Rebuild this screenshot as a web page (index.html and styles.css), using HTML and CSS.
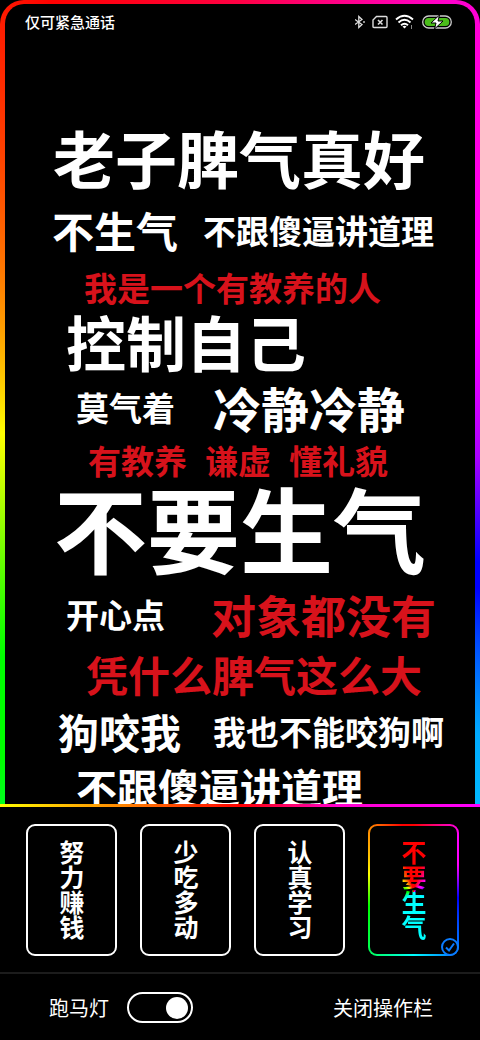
FILE: index.html
```
<!DOCTYPE html>
<html lang="zh-CN">
<head>
  <meta charset="UTF-8" />
  <meta name="viewport" content="width=device-width, initial-scale=1.0" />
  <title>不要生气</title>
  <link rel="stylesheet" href="styles.css">
</head>
<body>
  <div class="marquee-border"></div>

  <header class="status-bar">
    <span>仅可紧急通话</span>
    <div class="status-icons">
      <svg width="10" height="14" viewBox="0 0 10 14" fill="none" stroke="#ddd" stroke-width="1.3">
        <path d="M0 4.500 L7 9.500 L3.800 12.500 V1.500 L7 4.500 L0 9.500" />
        <path d="M9 6 V8" />
      </svg>
      <svg width="16" height="14" viewBox="0 0 16 14" fill="none" stroke="#ddd" stroke-width="1.4">
        <path d="M4.5 1.5 H14 Q15 1.5 15 2.5 V11.5 Q15 12.5 14 12.5 H2 Q1 12.5 1 11.5 V5 Z" />
        <path d="M6 5 L10.500 9.500 M10.500 5 L6 9.500" stroke-width="1.6" />
      </svg>
      <svg width="20" height="16" viewBox="0 0 20 16" fill="none" stroke="#fff" stroke-width="1.9">
        <path d="M1 5.500 Q9.500 -2 18 5.500" />
        <path d="M3.500 8.500 Q9.500 3 15.500 8.500" />
        <path d="M6 11.300 Q9.500 8 13 11.300" />
        <path d="M7.500 12.500 Q9.500 11 11.500 12.500 L9.500 14.500 Z" fill="#fff" stroke="none" />
        <path d="M16.500 11 V15" stroke="#888" stroke-width="1" />
      </svg>
      <svg width="30" height="14" viewBox="0 0 30 14">
        <rect x="0.700" y="1" width="28.600" height="12" rx="6" fill="none" stroke="#ccc" stroke-width="1.300" />
        <rect x="2.700" y="3" width="24.600" height="8" rx="4" fill="#4bbd1b" />
        <path d="M17.500 0 L9 8 H14 L12.500 14 L21 6 H16 Z" fill="#fff" stroke="#000" stroke-width="1" />
      </svg>
    </div>
  </header>

  <main class="wallpaper">
    <div class="line line-title"><span class="xl">老子脾气真好</span></div>
    <div class="line line-calm"><span class="md">不生气</span><span class="sm">不跟傻逼讲道理</span></div>
    <div class="line line-polite red"><span class="sm">我是一个有教养的人</span></div>
    <div class="line line-control"><span class="xl">控制自己</span></div>
    <div class="line line-cool"><span class="sm">莫气着</span><span class="lg">冷静冷静</span></div>
    <div class="line line-manners red"><span class="sm">有教养</span><span class="sm">谦虚</span><span class="sm">懂礼貌</span></div>
    <div class="line line-hero"><span class="hero">不要生气</span></div>
    <div class="line line-happy"><span class="sm">开心点</span><span class="lg red">对象都没有</span></div>
    <div class="line line-temper red"><span class="md">凭什么脾气这么大</span></div>
    <div class="line line-dog"><span class="md">狗咬我</span><span class="sm">我也不能咬狗啊</span></div>
    <div class="line line-reason"><span class="md">不跟傻逼讲道理</span></div>
  </main>

  <section class="panel">
    <div class="cards">
      <label class="card"><input type="radio" name="wallpaper" /><span>努力赚钱</span></label>
      <label class="card"><input type="radio" name="wallpaper" /><span>少吃多动</span></label>
      <label class="card"><input type="radio" name="wallpaper" /><span>认真学习</span></label>
      <label class="card active">
        <input type="radio" name="wallpaper" checked /><span>不要生气</span>
        <svg class="check" width="18" height="18" viewBox="0 0 18 18" fill="none" stroke="#0a7cff" stroke-width="2">
          <circle cx="9" cy="9" r="8" fill="#000" />
          <path d="M5 9.500 L8 12.500 L13 5.500" />
        </svg>
      </label>
    </div>
    <div class="actions">
      <label class="toggle">跑马灯<input type="checkbox" checked /></label>
      <button type="button">关闭操作栏</button>
    </div>
  </section>
</body>
</html>
```
FILE: styles.css
```
* {
  box-sizing: border-box;
}
body {
  margin: 0;
  height: 100vh;
  display: flex;
  flex-direction: column;
  background: #000;
  color: #fff;
  font-family: "Noto Sans CJK SC", sans-serif;
}

/* running light round the screen, the panel covers its lower part */
.marquee-border {
  position: absolute;
  inset: 0;
  border: 5px solid transparent;
  border-top-width: 4px;
  border-radius: 24px;
  background:
    linear-gradient(#000, #000) padding-box,
    conic-gradient(#f04 0deg, #f0c 22deg, #f0d 28deg, #f0f 50deg, #a0f 75deg, #00f 100deg, #00f 106deg, #0af 132deg, #0ff 180deg, #0f0 225deg, #0f0 240deg, #ff0 290deg, #f30 330deg, #f00 340deg, #f04 360deg) border-box;
}

.status-bar {
  position: relative;
  display: flex;
  justify-content: space-between;
  align-items: center;
  height: 43px;
  padding: 0 28px 0 25px;
  font-size: 15px;
  font-weight: 500;
}
.status-icons {
  display: flex;
  align-items: center;
  gap: 7px;
}

.wallpaper {
  position: relative;
  flex: 1;
  min-height: 0;
  overflow: hidden;
  padding-top: 75px;
  font-weight: 700;
  line-height: 1;
}
.line {
  display: flex;
  align-items: center;
  height: 66px;
  white-space: nowrap;
}
.red {
  color: #d7121b;
}
.sm { font-size: 33px; }
.md { font-size: 42px; }
.lg { font-size: 48px; }
.xl { font-size: 62px; }
.hero { font-size: 93px; }
.line-title { height: 78px; padding-left: 53px; }
.line-calm { height: 68px; padding-left: 52px; gap: 25px; }
.line-polite { height: 46px; padding-left: 84px; }
.line-control { height: 62px; padding-left: 66px; }
.line-control .xl { font-size: 60px; }
.line-cool { height: 70px; padding-left: 76px; gap: 38px; }
.line-manners { height: 36px; padding-left: 88px; gap: 18px; }
.line-hero { height: 96px; margin-bottom: 10px; padding-left: 54px; }
.line-happy { height: 60px; padding-left: 66px; gap: 46px; }
.line-happy .lg { font-size: 45px; }
.line-temper { height: 60px; padding-left: 86px; }
.line-dog { height: 54px; padding-left: 58px; gap: 32px; }
.line-reason { height: 56px; padding-left: 76px; }
.line-dog .md,
.line-reason .md { font-size: 41px; }

.panel {
  position: relative;
  background: #000;
  border-top: 3px solid;
  border-image: linear-gradient(90deg, #ff0, #f80 25%, #f00 50%, #f0c 70%, #f0f) 1;
}
.cards {
  display: flex;
  justify-content: space-between;
  padding: 17px 21px 16px 26px;
}
.card {
  position: relative;
  display: flex;
  align-items: center;
  justify-content: center;
  width: 91px;
  height: 132px;
  border: 2px solid #fff;
  border-radius: 9px;
  font-size: 25px;
  font-weight: 700;
  line-height: 25px;
}
.card span {
  writing-mode: vertical-rl;
}
.card input {
  position: absolute;
  opacity: 0;
}
.card.active {
  border-color: transparent;
  background:
    linear-gradient(#000, #000) padding-box,
    conic-gradient(#f00, #f0f 40deg, #f0f 60deg, #00f 100deg, #08f 150deg, #0ff 180deg, #0f4 220deg, #0f0 250deg, #ff0 290deg, #f80 325deg, #f00 350deg) border-box;
}
.card.active span {
  color: transparent;
  background: conic-gradient(at 50% 52%, #f00, #f00 15deg, #f0f 48deg, #f0f 60deg, #00f 85deg, #0ff 115deg, #0ff 230deg, #0f0 270deg, #0f0 285deg, #ff0 310deg, #f00 345deg);
  background-clip: text;
  -webkit-background-clip: text;
}
.check {
  position: absolute;
  right: -2px;
  bottom: -2px;
}
.actions {
  display: flex;
  justify-content: space-between;
  align-items: center;
  height: 68px;
  padding: 0 47px 0 49px;
  border-top: 2px solid #1c1c1c;
  font-size: 20px;
}
.toggle {
  display: flex;
  align-items: center;
  gap: 18px;
}
.toggle input {
  appearance: none;
  width: 66px;
  height: 31px;
  margin: 0;
  padding: 3px;
  border: 2px solid #fff;
  border-radius: 16px;
}
.toggle input::before {
  content: "";
  display: block;
  width: 22px;
  height: 22px;
  border-radius: 50%;
  background: #fff;
}
.toggle input:checked::before {
  margin-left: auto;
}
.actions button {
  padding: 0;
  border: 0;
  background: none;
  color: #fff;
  font: inherit;
}
```
